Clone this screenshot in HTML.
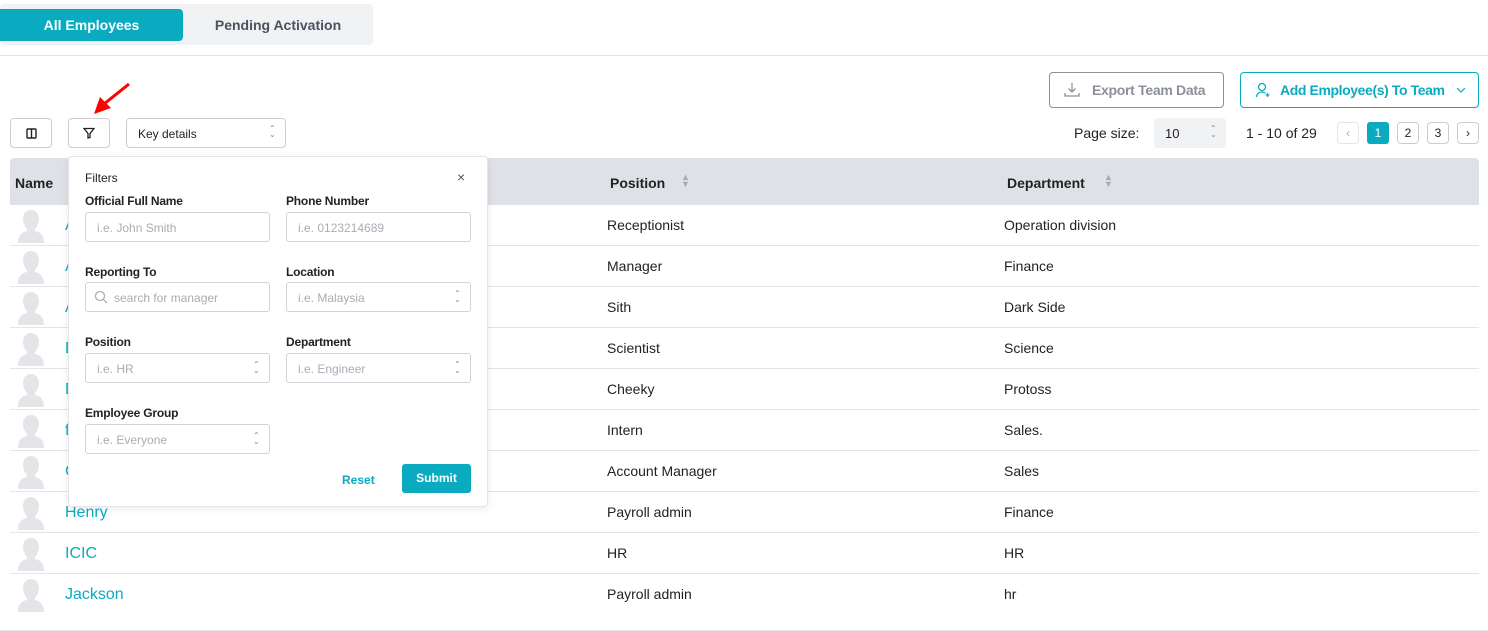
<!DOCTYPE html><html><head><style>
body{margin:0;width:1488px;height:631px;position:relative;background:#fff;font-family:"Liberation Sans",sans-serif;overflow:hidden;color:#222}
.a{position:absolute}
.teal{color:#0aabc1}
.btn{position:absolute;border:1px solid #ccc;border-radius:4px;background:#fff;box-sizing:border-box}
.row{position:absolute;left:10px;width:1469px;height:41px;border-bottom:1px solid #e3e5e8;box-sizing:border-box;font-size:14px}
.av{position:absolute;left:6px;top:4px}
.nm{position:absolute;left:55px;top:12px;font-size:16px;color:#0aabc1}
.ps{position:absolute;left:597px;top:12px}
.dp{position:absolute;left:994px;top:12px}
.lbl{position:absolute;font-size:12px;font-weight:bold;color:#222;letter-spacing:-0.2px}
.inp{position:absolute;width:185px;height:30px;border:1px solid #d0d4d9;border-radius:3px;box-sizing:border-box;font-size:12px;color:#a8adb4;padding:8px 0 0 11px}
.chev{position:absolute;right:10px;top:8px;width:6px;font-size:8px;line-height:6px;color:#888}
</style></head><body>
<div class="a" style="left:0;top:4px;width:373px;height:41px;background:#f1f2f4;border-radius:4px"></div>
<div class="a" style="left:0;top:9px;width:183px;height:32px;background:#0aabc1;border-radius:0 4px 4px 0;color:#fff;font-weight:bold;font-size:14px;text-align:center;line-height:32px">All Employees</div>
<div class="a" style="left:183px;top:9px;width:190px;height:32px;color:#4a5260;font-weight:bold;font-size:14px;text-align:center;line-height:32px">Pending Activation</div>
<div class="a" style="left:0;top:55px;width:1488px;height:1px;background:#e0e2e5"></div>

<div class="btn" style="left:1049px;top:72px;width:175px;height:36px;border-color:#8b9099;color:#8b9099;font-size:14px;font-weight:bold;line-height:34px;padding-left:42px;letter-spacing:-0.3px">Export Team Data
<svg class="a" style="left:14px;top:9px" width="16" height="16" viewBox="0 0 16 16" fill="none" stroke="#8b9099" stroke-width="1.3"><path d="M8 1v9M4.5 6.5L8 10l3.5-3.5M1 11v3h14v-3"/></svg></div>
<div class="btn" style="left:1240px;top:72px;width:239px;height:36px;border-color:#0aabc1;color:#0aabc1;font-size:14px;font-weight:bold;line-height:34px;padding-left:39px;letter-spacing:-0.4px">Add Employee(s) To Team
<svg class="a" style="left:14px;top:9px" width="16" height="16" viewBox="0 0 16 16" fill="none" stroke="#0aabc1" stroke-width="1.3"><circle cx="7" cy="5" r="3.5"/><path d="M1.5 15c0-3 2.5-5 5.5-5 1.5 0 2.5.4 3.5 1M12.5 11v4M10.5 13h4"/></svg>
<svg class="a" style="left:215px;top:13px" width="10" height="8" viewBox="0 0 10 8" fill="none" stroke="#0aabc1" stroke-width="1.2"><path d="M1 2l4 4 4-4"/></svg></div>

<div class="btn" style="left:10px;top:118px;width:42px;height:30px"><svg class="a" style="left:15px;top:9px" width="11" height="11" viewBox="0 0 11 11" fill="none" stroke="#222" stroke-width="1.4"><rect x="1" y="1" width="9" height="9" rx="1"/><path d="M5.5 1v9"/></svg></div>
<div class="btn" style="left:68px;top:118px;width:42px;height:30px"><svg class="a" style="left:14px;top:8px" width="12" height="12" viewBox="0 0 12 12" fill="none" stroke="#222" stroke-width="1.3"><path d="M1 1.5h10L7 6.5v4L5 11V6.5z"/></svg></div>
<div class="btn" style="left:126px;top:118px;width:160px;height:30px;font-size:12px;padding:8px 0 0 11px">Key details<span class="chev" style="top:7px">⌃<br>⌄</span></div>
<svg class="a" style="left:92px;top:82px" width="40" height="34" viewBox="0 0 40 34"><path d="M37 2L12 22" stroke="#f00" stroke-width="3"/><path d="M2 32l6-17 11 11z" fill="#f00"/></svg>

<div class="a" style="left:1074px;top:125px;font-size:14px">Page size:</div>
<div class="a" style="left:1154px;top:118px;width:72px;height:30px;background:#f1f2f4;border-radius:3px;font-size:13px"><span class="a" style="left:11px;top:8px">10</span><span class="chev" style="top:8px">⌃<br>⌄</span></div>
<div class="a" style="left:1246px;top:125px;font-size:14px">1 - 10 of 29</div>
<div class="btn" style="left:1337px;top:122px;width:22px;height:22px;border-color:#e3e5e8;color:#aaa;font-size:12px;text-align:center;line-height:20px">‹</div>
<div class="a" style="left:1367px;top:122px;width:22px;height:22px;background:#0aabc1;border-radius:3px;color:#fff;font-size:12px;text-align:center;line-height:22px">1</div>
<div class="btn" style="left:1397px;top:122px;width:22px;height:22px;font-size:12px;text-align:center;line-height:20px">2</div>
<div class="btn" style="left:1427px;top:122px;width:22px;height:22px;font-size:12px;text-align:center;line-height:20px">3</div>
<div class="btn" style="left:1457px;top:122px;width:22px;height:22px;font-size:12px;text-align:center;line-height:20px">›</div>

<div class="a" style="left:10px;top:158px;width:1469px;height:47px;background:#dee1e5;border-radius:4px 4px 0 0;font-weight:bold;font-size:14px">
<span class="a" style="left:5px;top:17px">Name</span>
<span class="a" style="left:600px;top:17px">Position</span><span class="a" style="left:671px;top:16px;color:#aaa;font-size:9px;line-height:7px">▲<br>▼</span>
<span class="a" style="left:997px;top:17px">Department</span><span class="a" style="left:1094px;top:16px;color:#aaa;font-size:9px;line-height:7px">▲<br>▼</span>
</div>

<div class="row" style="top:205px"><svg class="av" width="30" height="34" viewBox="0 0 30 34"><path d="M15 1c5 0 8 4 8 9 0 4-2 8-4 10v2c5 1 9 4 9 12H2c0-8 4-11 9-12v-2c-2-2-4-6-4-10 0-5 3-9 8-9z" fill="#e3e5e8"/></svg><span class="nm">A</span><span class="ps">Receptionist</span><span class="dp">Operation division</span></div>
<div class="row" style="top:246px"><svg class="av" width="30" height="34" viewBox="0 0 30 34"><path d="M15 1c5 0 8 4 8 9 0 4-2 8-4 10v2c5 1 9 4 9 12H2c0-8 4-11 9-12v-2c-2-2-4-6-4-10 0-5 3-9 8-9z" fill="#e3e5e8"/></svg><span class="nm">A</span><span class="ps">Manager</span><span class="dp">Finance</span></div>
<div class="row" style="top:287px"><svg class="av" width="30" height="34" viewBox="0 0 30 34"><path d="M15 1c5 0 8 4 8 9 0 4-2 8-4 10v2c5 1 9 4 9 12H2c0-8 4-11 9-12v-2c-2-2-4-6-4-10 0-5 3-9 8-9z" fill="#e3e5e8"/></svg><span class="nm">A</span><span class="ps">Sith</span><span class="dp">Dark Side</span></div>
<div class="row" style="top:328px"><svg class="av" width="30" height="34" viewBox="0 0 30 34"><path d="M15 1c5 0 8 4 8 9 0 4-2 8-4 10v2c5 1 9 4 9 12H2c0-8 4-11 9-12v-2c-2-2-4-6-4-10 0-5 3-9 8-9z" fill="#e3e5e8"/></svg><span class="nm">B</span><span class="ps">Scientist</span><span class="dp">Science</span></div>
<div class="row" style="top:369px"><svg class="av" width="30" height="34" viewBox="0 0 30 34"><path d="M15 1c5 0 8 4 8 9 0 4-2 8-4 10v2c5 1 9 4 9 12H2c0-8 4-11 9-12v-2c-2-2-4-6-4-10 0-5 3-9 8-9z" fill="#e3e5e8"/></svg><span class="nm">D</span><span class="ps">Cheeky</span><span class="dp">Protoss</span></div>
<div class="row" style="top:410px"><svg class="av" width="30" height="34" viewBox="0 0 30 34"><path d="M15 1c5 0 8 4 8 9 0 4-2 8-4 10v2c5 1 9 4 9 12H2c0-8 4-11 9-12v-2c-2-2-4-6-4-10 0-5 3-9 8-9z" fill="#e3e5e8"/></svg><span class="nm">f</span><span class="ps">Intern</span><span class="dp">Sales.</span></div>
<div class="row" style="top:451px"><svg class="av" width="30" height="34" viewBox="0 0 30 34"><path d="M15 1c5 0 8 4 8 9 0 4-2 8-4 10v2c5 1 9 4 9 12H2c0-8 4-11 9-12v-2c-2-2-4-6-4-10 0-5 3-9 8-9z" fill="#e3e5e8"/></svg><span class="nm">G</span><span class="ps">Account Manager</span><span class="dp">Sales</span></div>
<div class="row" style="top:492px"><svg class="av" width="30" height="34" viewBox="0 0 30 34"><path d="M15 1c5 0 8 4 8 9 0 4-2 8-4 10v2c5 1 9 4 9 12H2c0-8 4-11 9-12v-2c-2-2-4-6-4-10 0-5 3-9 8-9z" fill="#e3e5e8"/></svg><span class="nm">Henry</span><span class="ps">Payroll admin</span><span class="dp">Finance</span></div>
<div class="row" style="top:533px"><svg class="av" width="30" height="34" viewBox="0 0 30 34"><path d="M15 1c5 0 8 4 8 9 0 4-2 8-4 10v2c5 1 9 4 9 12H2c0-8 4-11 9-12v-2c-2-2-4-6-4-10 0-5 3-9 8-9z" fill="#e3e5e8"/></svg><span class="nm">ICIC</span><span class="ps">HR</span><span class="dp">HR</span></div>
<div class="row" style="top:574px;border-bottom:none"><svg class="av" width="30" height="34" viewBox="0 0 30 34"><path d="M15 1c5 0 8 4 8 9 0 4-2 8-4 10v2c5 1 9 4 9 12H2c0-8 4-11 9-12v-2c-2-2-4-6-4-10 0-5 3-9 8-9z" fill="#e3e5e8"/></svg><span class="nm">Jackson</span><span class="ps">Payroll admin</span><span class="dp">hr</span></div>
<div class="a" style="left:0;top:630px;width:1488px;height:1px;background:#e0e2e5"></div>

<div class="a" style="left:68px;top:156px;width:420px;height:351px;background:#fff;border:1px solid #e3e5e8;border-radius:4px;box-sizing:border-box;box-shadow:0 2px 8px rgba(0,0,0,.08)">
<span class="a" style="left:16px;top:14px;font-size:12px">Filters</span>
<span class="a" style="left:388px;top:12px;font-size:14px;color:#555">×</span>
<span class="lbl" style="left:16px;top:37px">Official Full Name</span><span class="lbl" style="left:217px;top:37px">Phone Number</span>
<div class="inp" style="left:16px;top:55px">i.e. John Smith</div><div class="inp" style="left:217px;top:55px">i.e. 0123214689</div>
<span class="lbl" style="left:16px;top:108px">Reporting To</span><span class="lbl" style="left:217px;top:108px">Location</span>
<div class="inp" style="left:16px;top:125px;padding-left:28px">search for manager<svg class="a" style="left:8px;top:7px" width="14" height="14" viewBox="0 0 14 14" fill="none" stroke="#aaa" stroke-width="1.2"><circle cx="6" cy="6" r="4.5"/><path d="M9.5 9.5L13 13"/></svg></div>
<div class="inp" style="left:217px;top:125px">i.e. Malaysia<span class="chev">⌃<br>⌄</span></div>
<span class="lbl" style="left:16px;top:178px">Position</span><span class="lbl" style="left:217px;top:178px">Department</span>
<div class="inp" style="left:16px;top:196px">i.e. HR<span class="chev">⌃<br>⌄</span></div><div class="inp" style="left:217px;top:196px">i.e. Engineer<span class="chev">⌃<br>⌄</span></div>
<span class="lbl" style="left:16px;top:249px">Employee Group</span>
<div class="inp" style="left:16px;top:267px">i.e. Everyone<span class="chev">⌃<br>⌄</span></div>
<span class="a teal" style="left:273px;top:316px;font-size:12px;font-weight:bold">Reset</span>
<div class="a" style="left:333px;top:307px;width:69px;height:29px;background:#0aabc1;border-radius:3px;color:#fff;font-size:12px;font-weight:bold;text-align:center;line-height:29px">Submit</div>
</div>
</body></html>
